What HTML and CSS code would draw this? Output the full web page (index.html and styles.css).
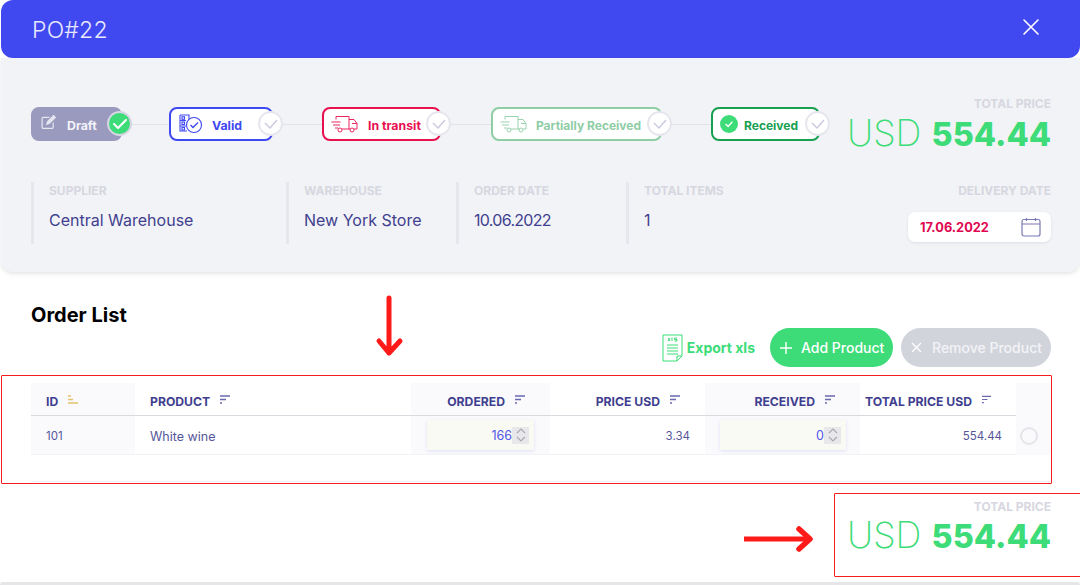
FILE: index.html
```html
<!DOCTYPE html>
<html lang="en">
<head>
    <meta charset="UTF-8">
    <meta name="viewport" content="width=device-width, initial-scale=1.0">
    <title>PO#22</title>
    <link rel="stylesheet" href="styles.css">
</head>
<body>
    <div class="modal">
        <header class="modal-header">
            <h1>PO#22</h1>
            <svg class="close-icon" width="18" height="18" viewBox="0 0 18 18"><path d="M2 2l14 14M16 2L2 16" stroke="#fff" stroke-width="1.6" stroke-linecap="round"/></svg>
        </header>

        <section class="summary">
            <div class="status-row">
                <div class="steps">
                    <div class="step step-draft">
                        <svg class="step-icon" width="17" height="17" viewBox="0 0 20 20" fill="none" stroke="#e6e6f0" stroke-width="1.4"><path d="M11 4H3.500a1 1 0 0 0-1 1v11a1 1 0 0 0 1 1h11a1 1 0 0 0 1-1v-6"/><path d="M8 12l1-3 7-7 2 2-7 7z" fill="#e6e6f0"/></svg>
                        <span>Draft</span>
                        <span class="badge badge-done"><svg width="16" height="12" viewBox="0 0 16 12" fill="none"><path d="M2 6l4 4 8-8" stroke="#fff" stroke-width="2" stroke-linecap="round" stroke-linejoin="round"/></svg></span>
                    </div>
                    <div class="connector connector-draft"></div>
                    <div class="step step-valid">
                        <svg class="step-icon" width="24" height="20" viewBox="0 0 24 20" fill="none" stroke="#4048f0" stroke-width="1.1"><path d="M1 1h9v5.500M1 1v16h7M1 6.500h6M1 12h6"/><rect x="3" y="2.800" width="2.500" height="2.500"/><rect x="3" y="8" width="2.500" height="2.500"/><rect x="3" y="13.500" width="2.500" height="2.500"/><circle cx="15" cy="11" r="7.500" fill="#fff"/><path d="M11.500 11l2.500 2.500 5-5" stroke-width="1.400"/></svg>
                        <span>Valid</span>
                        <span class="badge"><svg width="16" height="12" viewBox="0 0 16 12" fill="none"><path d="M2 5l5 5 7-8" stroke="#c9c9de" stroke-width="1.400"/></svg></span>
                    </div>
                    <div class="connector connector-valid"></div>
                    <div class="step step-transit">
                        <svg class="step-icon truck" width="28" height="18" viewBox="0 0 28 18" fill="none" stroke="currentColor" stroke-width="0.9"><path d="M5 1.500h13v12.500H11M18 4.500h5l3 4v5.500h-3M18 14h1M21 8.500h5M5 1.500v3M0.500 7h9M2 10h7M4 13h3"/><circle cx="9" cy="15" r="2"/><circle cx="21" cy="15" r="2"/></svg>
                        <span>In transit</span>
                        <span class="badge"><svg width="16" height="12" viewBox="0 0 16 12" fill="none"><path d="M2 5l5 5 7-8" stroke="#c9c9de" stroke-width="1.400"/></svg></span>
                    </div>
                    <div class="connector connector-transit"></div>
                    <div class="step step-partial">
                        <svg class="step-icon truck" width="28" height="18" viewBox="0 0 28 18" fill="none" stroke="currentColor" stroke-width="0.9"><path d="M5 1.500h13v12.500H11M18 4.500h5l3 4v5.500h-3M18 14h1M21 8.500h5M5 1.500v3M0.500 7h9M2 10h7M4 13h3"/><circle cx="9" cy="15" r="2"/><circle cx="21" cy="15" r="2"/></svg>
                        <span>Partially Received</span>
                        <span class="badge"><svg width="16" height="12" viewBox="0 0 16 12" fill="none"><path d="M2 5l5 5 7-8" stroke="#c9c9de" stroke-width="1.400"/></svg></span>
                    </div>
                    <div class="connector connector-partial"></div>
                    <div class="step step-received">
                        <svg class="step-icon" width="18" height="18" viewBox="0 0 16 16"><circle cx="8" cy="8" r="8" fill="#3ddc78"/><path d="M5 8l2.200 2.200L11 6" fill="none" stroke="#fff" stroke-width="1.200"/></svg>
                        <span>Received</span>
                        <span class="badge"><svg width="16" height="12" viewBox="0 0 16 12" fill="none"><path d="M2 5l5 5 7-8" stroke="#c9c9de" stroke-width="1.400"/></svg></span>
                    </div>
                </div>
                <div class="total">
                    <div class="label">TOTAL PRICE</div>
                    <div class="total-value">USD <b>554.44</b></div>
                </div>
            </div>

            <div class="meta-row">
                <div class="meta meta-supplier"><div class="label">SUPPLIER</div><div class="meta-value">Central Warehouse</div></div>
                <div class="meta meta-small"><div class="label">WAREHOUSE</div><div class="meta-value">New York Store</div></div>
                <div class="meta meta-small"><div class="label">ORDER DATE</div><div class="meta-value meta-date">10.06.2022</div></div>
                <div class="meta meta-items"><div class="label">TOTAL ITEMS</div><div class="meta-value">1</div></div>
                <div class="delivery">
                    <div class="label">DELIVERY DATE</div>
                    <div class="date-input">
                        <span>17.06.2022</span>
                        <svg width="20" height="20" viewBox="0 0 20 20" fill="none" stroke="#7b7bb5" stroke-width="1.200"><rect x="1" y="2.500" width="18" height="16.500" rx="2"/><path d="M1 7h18M5.500 1v3M14.500 1v3"/></svg>
                    </div>
                </div>
            </div>
        </section>

        <section class="order">
            <h2>Order List</h2>
            <div class="actions">
                <div class="export">
                    <svg width="21" height="28" viewBox="0 0 21 28" fill="none" stroke="#3ddc78" stroke-width="1"><path d="M1 1h19v21l-5 5H1z"/><path d="M20 22h-5v5M5 11h11M5 14h11M5 17h11M5 20h11"/><path d="M6 7l2-3M6 4l2 3M10 3.500V7M12.500 7H15V5.500h-2.500V4H15"/></svg>
                    <span>Export xls</span>
                </div>
                <div class="btn btn-add">
                    <svg width="14" height="14" viewBox="0 0 14 14"><path d="M7 1v12M1 7h12" stroke="#fff" stroke-width="1.400"/></svg>
                    <span>Add Product</span>
                </div>
                <div class="btn btn-remove">
                    <svg width="11" height="11" viewBox="0 0 11 11"><path d="M1 1l9 9M10 1l-9 9" stroke="#fff" stroke-width="1.200"/></svg>
                    <span>Remove Product</span>
                </div>
            </div>

            <div class="table">
                <div class="cell head tint"><span>ID</span><svg class="sort" width="11" height="9" viewBox="0 0 11 9"><path d="M0 1h3M0 4.500h5M0 8h10" stroke="#e3c468" stroke-width="1.300"/></svg></div>
                <div class="cell head"><span>PRODUCT</span><svg class="sort" width="11" height="9" viewBox="0 0 11 9"><path d="M0 1h10M0 4.500h6M0 8h2" stroke="#6a6ab0" stroke-width="1.300"/></svg></div>
                <div class="cell head tint right"><span>ORDERED</span><svg class="sort" width="11" height="9" viewBox="0 0 11 9"><path d="M0 1h10M0 4.500h6M0 8h2" stroke="#6a6ab0" stroke-width="1.300"/></svg></div>
                <div class="cell head right"><span>PRICE USD</span><svg class="sort" width="11" height="9" viewBox="0 0 11 9"><path d="M0 1h10M0 4.500h6M0 8h2" stroke="#6a6ab0" stroke-width="1.300"/></svg></div>
                <div class="cell head tint right"><span>RECEIVED</span><svg class="sort" width="11" height="9" viewBox="0 0 11 9"><path d="M0 1h10M0 4.500h6M0 8h2" stroke="#6a6ab0" stroke-width="1.300"/></svg></div>
                <div class="cell head right head-total"><span>TOTAL PRICE USD</span><svg class="sort" width="11" height="9" viewBox="0 0 11 9"><path d="M0 1h10M0 4.500h6M0 8h2" stroke="#6a6ab0" stroke-width="1.300"/></svg></div>
                <div class="cell head-end tint"></div>

                <div class="cell body tint num">101</div>
                <div class="cell body">White wine</div>
                <div class="cell body tint input-cell input-ordered">
                    <div class="num-input"><span>166</span><span class="spinner"><svg width="10" height="14" viewBox="0 0 10 14" fill="none" stroke="#a9a9b5" stroke-width="1.200"><path d="M1 5l4-4 4 4M1 9l4 4 4-4"/></svg></span></div>
                </div>
                <div class="cell body right num price-cell">3.34</div>
                <div class="cell body tint input-cell input-received">
                    <div class="num-input"><span>0</span><span class="spinner"><svg width="10" height="14" viewBox="0 0 10 14" fill="none" stroke="#a9a9b5" stroke-width="1.200"><path d="M1 5l4-4 4 4M1 9l4 4 4-4"/></svg></span></div>
                </div>
                <div class="cell body right num total-cell">554.44</div>
                <div class="cell body tint radio-cell"><span class="radio"></span></div>
            </div>

            <div class="table-foot"></div>

            <div class="total total-bottom">
                <div class="label">TOTAL PRICE</div>
                <div class="total-value">USD <b>554.44</b></div>
            </div>
        </section>
        <div class="page-edge"></div>
    </div>

    <!-- red annotations drawn over the screenshot -->
    <div class="mark mark-list"></div>
    <div class="mark mark-total"></div>
    <svg class="arrow arrow-down" width="30" height="62" viewBox="0 0 30 62" fill="none" stroke="#ff1a1a" stroke-width="5" stroke-linecap="round" stroke-linejoin="round"><path d="M14 3v55M4 46l10 12 11-12"/></svg>
    <svg class="arrow arrow-right" width="72" height="28" viewBox="0 0 72 28" fill="none" stroke="#ff1a1a" stroke-linejoin="round" stroke-linecap="round"><path d="M2 14h64" stroke-width="5" stroke-linecap="butt"/><path d="M57 4l11 10-11 10" stroke-width="5.500"/></svg>
</body>
</html>
```

FILE: styles.css
```css
* {
    box-sizing: border-box;
}

body {
    margin: 0;
    width: 1080px;
    height: 585px;
    overflow: hidden;
    position: relative;
    background-color: #ffffff;
    font-family: 'Inter', 'Open Sans', sans-serif;
    color: #3f3f8f;
}

.modal {
    padding-left: 1px;
}

/* Blue title bar */
.modal-header {
    height: 58px;
    background-color: #4048f0;
    border-radius: 12px 0 12px 12px;
    display: flex;
    align-items: center;
    justify-content: space-between;
    padding: 2px 40px 0 31px;
    color: #e8e9ff;
}

.modal-header h1 {
    margin: 0;
    font-size: 23px;
    font-weight: 300;
    letter-spacing: 0.2px;
}

.close-icon {
    margin-top: -7px;
}

/* Grey summary panel */
.summary {
    height: 214px;
    background-color: #f2f3f6;
    border-radius: 0 0 12px 12px;
    box-shadow: 0 2px 4px rgba(0, 0, 0, 0.1);
    padding: 0 29px 0 30px;
}

.status-row {
    height: 124px;
    display: flex;
    justify-content: space-between;
    position: relative;
}

.steps {
    display: flex;
    align-items: center;
    height: 34px;
    margin-top: 49px;
}

.step {
    position: relative;
    height: 34px;
    display: flex;
    align-items: center;
    border: 2px solid;
    border-radius: 8px;
    background-color: #ffffff;
    font-size: 12.300px;
    font-weight: 700;
    padding-left: 7px;
}

.step > span:first-of-type {
    margin-top: 3px;
}

.step-draft {
    width: 91px;
    background-color: #9a9abf;
    border-color: #9a9abf;
    color: #f3f3f8;
    gap: 10px;
}

.step-draft .step-icon {
    margin-top: -4px;
}

.step-valid {
    width: 104px;
    border-color: #4048f0;
    color: #4048f0;
    padding-left: 8px;
    gap: 9px;
}

.step-transit {
    width: 119px;
    border-color: #e8104f;
    color: #e8104f;
    gap: 9px;
}

.step-partial {
    width: 171px;
    border-color: #8fcda6;
    color: #8fcda6;
    gap: 8px;
    font-size: 12px;
}

.step-received {
    width: 109px;
    border-color: #17a04f;
    color: #17a04f;
    gap: 6px;
    font-size: 12px;
}

.step-icon {
    flex-shrink: 0;
}

/* Round check that sits over the right end of a step */
.badge {
    position: absolute;
    right: -12px;
    top: 2px;
    width: 25px;
    height: 25px;
    border-radius: 50%;
    background-color: #ffffff;
    border: 2px solid #e6e6ee;
    display: flex;
    align-items: center;
    justify-content: center;
}

.badge-done {
    background-color: #3ddc78;
    border-color: #d5d5e4;
}

.connector {
    height: 1px;
    background-color: #e2e3e9;
}

.connector-draft { width: 47px; }
.connector-valid { width: 49px; }
.connector-transit { width: 50px; }
.connector-partial { width: 49px; }

.label {
    font-size: 12px;
    font-weight: 700;
    color: #d6d7e0;
    line-height: 14px;
}

.total {
    text-align: right;
    padding-top: 39px;
}

.total-value {
    font-size: 36px;
    font-weight: 200;
    color: #3ddc78;
    line-height: 40px;
    margin-top: 2px;
}

.total-value b {
    font-size: 32.400px;
    font-weight: 800;
}

/* Supplier / warehouse / date row */
.meta-row {
    display: flex;
    height: 62px;
}

.meta {
    border-left: 3px solid #e6e7ec;
    padding: 2px 0 0 15px;
}

.meta-supplier { width: 255px; }
.meta-small { width: 170px; }
.meta-items { width: 170px; }

.meta-value {
    font-size: 16px;
    margin-top: 12px;
    line-height: 20px;
}

.meta-date {
    letter-spacing: -0.7px;
}

.delivery {
    flex: 1;
    padding-top: 2px;
    display: flex;
    flex-direction: column;
    align-items: flex-end;
}

.date-input {
    width: 143px;
    height: 30px;
    margin-top: 14px;
    background-color: #ffffff;
    border-radius: 7px;
    box-shadow: 0 1px 3px rgba(60, 60, 120, 0.1);
    display: flex;
    align-items: center;
    justify-content: space-between;
    padding: 0 10px 0 12px;
    color: #e0064f;
    font-size: 12.800px;
    font-weight: 700;
}

/* Order list */
.order {
    padding: 0 29px 0 30px;
}

.order h2 {
    margin: 31px 0 0;
    font-size: 20px;
    font-weight: 700;
    color: #000000;
    line-height: 24px;
}

.actions {
    display: flex;
    justify-content: flex-end;
    align-items: center;
    height: 39px;
    margin-top: 1px;
}

.export {
    display: flex;
    align-items: center;
    gap: 4px;
    color: #3ddc78;
    font-size: 14px;
    font-weight: 700;
    margin-right: 15px;
}

.btn {
    height: 39px;
    border-radius: 20px;
    display: flex;
    align-items: center;
    color: #ffffff;
    font-size: 14px;
    font-weight: 500;
}

.btn-add {
    width: 123px;
    background-color: #3ddc78;
    padding-left: 9px;
    gap: 8px;
    margin-right: 8px;
}

.btn-remove {
    width: 150px;
    background-color: #d2d4dc;
    padding-left: 10px;
    gap: 10px;
    color: #f2f3f6;
}

.table {
    display: grid;
    grid-template-columns: 104px 276px 139px 155px 155px 156px 35px;
    grid-template-rows: 33px 39px;
    margin-top: 16px;
}

.cell {
    display: flex;
    align-items: center;
    font-size: 12.500px;
}

.tint {
    background-color: #fafafd;
}

.head {
    font-weight: 700;
    border-bottom: 1px solid #d9dae0;
    gap: 10px;
    padding: 4px 24px 0 15px;
    font-size: 12.200px;
    white-space: nowrap;
}

.head-total {
    padding-left: 5px;
}

.head svg {
    margin-top: -3px;
}

.right {
    justify-content: flex-end;
}

.head-end {
    border-bottom: 0;
}

.body {
    padding: 2px 15px 0;
    border-bottom: 1px solid #f2f3f6;
    color: #55559a;
}

.num {
    font-size: 11.500px;
}

.input-cell {
    justify-content: flex-end;
    padding: 0;
}

.input-ordered {
    padding-right: 16px;
}

.input-received {
    padding-right: 14px;
}

.input-ordered .num-input {
    width: 107px;
}

.input-received .num-input {
    width: 126px;
}

.price-cell {
    padding-right: 15px;
}

.total-cell {
    padding-right: 14px;
}

.num-input {
    height: 30px;
    background-color: #fafaf4;
    box-shadow: 0 1px 3px rgba(70, 70, 200, 0.15);
    display: flex;
    align-items: center;
    justify-content: flex-end;
    padding-right: 5px;
    color: #5158e8;
    font-size: 12.500px;
}

.spinner {
    width: 17px;
    height: 17px;
    background-color: #e8e8ea;
    display: flex;
    align-items: center;
    justify-content: center;
}

.radio-cell {
    padding: 0 0 0 4px;
    border-bottom: 0;
}

.radio {
    width: 18px;
    height: 18px;
    border-radius: 50%;
    border: 2px solid #e4e5e9;
}

.table-foot {
    height: 27px;
    border-bottom: 1px solid #f0f0f4;
}

.total-bottom {
    padding-top: 18px;
}

.total-bottom .total-value {
    margin-top: 2px;
    line-height: 38px;
}

.page-edge {
    position: absolute;
    left: 0;
    right: 0;
    bottom: 0;
    height: 3px;
    background-color: #e6e6e8;
    border-radius: 3px 3px 0 0;
}

/* Red annotations */
.mark {
    position: absolute;
    border: 1px solid #f41c1c;
    border-radius: 1px;
}

.mark-list {
    left: 1px;
    top: 375px;
    width: 1051px;
    height: 109px;
}

.mark-total {
    left: 834px;
    top: 493px;
    width: 250px;
    height: 84px;
}

.arrow {
    position: absolute;
}

.arrow-down {
    left: 375px;
    top: 295px;
}

.arrow-right {
    left: 742px;
    top: 525px;
}
```
